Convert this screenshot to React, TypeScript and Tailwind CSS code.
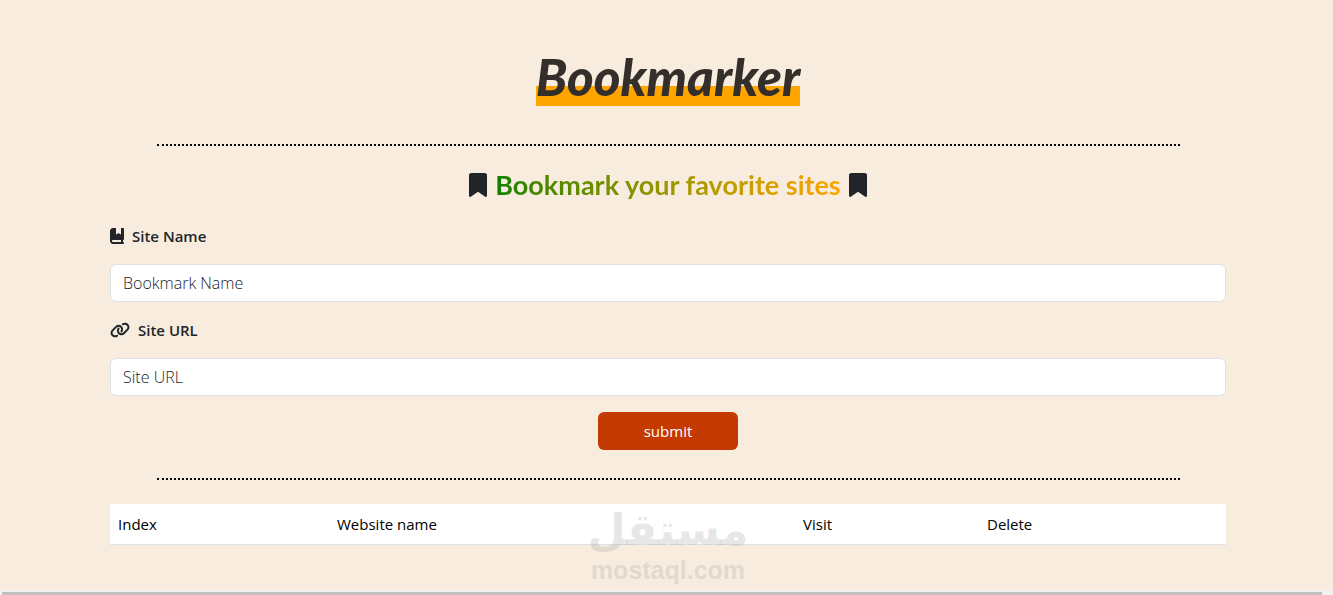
import type { ReactNode } from 'react'
import { FaBookBookmark, FaBookmark, FaLink } from 'react-icons/fa6'

const columns = [
  { title: 'Index', width: 'w-[219px]' },
  { title: 'Website name', width: 'w-[466px]' },
  { title: 'Visit', width: 'w-[184px]' },
  { title: 'Delete', width: 'w-[247px]' },
]

function Divider() {
  return <hr className="mx-auto w-11/12 max-w-[1024px] border-t-2 border-dotted border-black" />
}

type FieldProps = {
  id: string
  label: string
  placeholder: string
  icon: ReactNode
}

function Field({ id, label, placeholder, icon }: FieldProps) {
  return (
    <div className="mb-4">
      <label htmlFor={id} className="mb-4 flex h-6 items-center gap-2 font-semibold">
        {icon}
        {label}
      </label>
      <input
        id={id}
        type="text"
        placeholder={placeholder}
        className="block h-[38px] w-full rounded-md border border-[#dee2e6] bg-white px-3 text-base font-light placeholder:text-[#212529]"
      />
    </div>
  )
}

function Watermark() {
  return (
    <div className="pointer-events-none absolute top-1 left-1/2 flex w-40 -translate-x-1/2 flex-col items-center gap-1 text-[#a0a0a0]/25">
      <span lang="ar" dir="rtl" className="font-['DejaVu_Sans',sans-serif] text-[44px] leading-[44px] font-bold">
        مستقل
      </span>
      <span className="font-['Liberation_Sans',sans-serif] text-[25px] leading-7 font-bold">mostaql.com</span>
    </div>
  )
}

export default function App() {
  return (
    <div className="flex min-h-screen flex-col bg-[#f8ecde] font-['Open_Sans',sans-serif] text-[15px] leading-6 text-[#212529]">
      <div className="flex-1 pl-[3px]">
        <main className="mx-auto w-full max-w-[1140px] px-3 pt-12">
          <h1 className="mb-[38px] flex justify-center">
            <span className="bg-linear-to-b from-transparent from-[38px] to-[#ffa500] to-[38px] font-['Lato',cursive] text-[51px] leading-[58px] font-black text-[#352f2b] italic">
              Bookmarker
            </span>
          </h1>
          <Divider />
          <h2 className="mt-6 mb-6 flex h-[30px] items-center justify-center gap-2">
            <FaBookmark className="h-6 w-[18px]" />
            <span className="bg-linear-to-r from-[#008000] to-[#ffa500] bg-clip-text font-['Lato',sans-serif] text-[27px] leading-8 font-bold text-transparent">
              Bookmark your favorite sites
            </span>
            <FaBookmark className="h-6 w-[18px]" />
          </h2>
          <form onSubmit={(e) => e.preventDefault()}>
            <Field
              id="siteName"
              label="Site Name"
              placeholder="Bookmark Name"
              icon={<FaBookBookmark className="h-4 w-[14px]" />}
            />
            <Field id="siteUrl" label="Site URL" placeholder="Site URL" icon={<FaLink className="h-4 w-5" />} />
            <button type="submit" className="mx-auto mb-7 block h-[38px] w-[140px] rounded-md bg-[#c43a02] text-white">
              submit
            </button>
          </form>
          <Divider />
          <div className="relative mt-6">
            <table className="w-full table-fixed border-collapse bg-white text-left text-black">
              <thead>
                <tr className="border-b border-[#dee2e6]">
                  {columns.map((column) => (
                    <th key={column.title} scope="col" className={`${column.width} p-2 font-normal`}>
                      {column.title}
                    </th>
                  ))}
                </tr>
              </thead>
            </table>
            <Watermark />
          </div>
        </main>
      </div>
      <div className="bg-[#f1f1f1] pt-[2px] pr-[11px] pl-[2px]">
        <div className="h-[3px] bg-[#c1c1c1]" />
      </div>
    </div>
  )
}
